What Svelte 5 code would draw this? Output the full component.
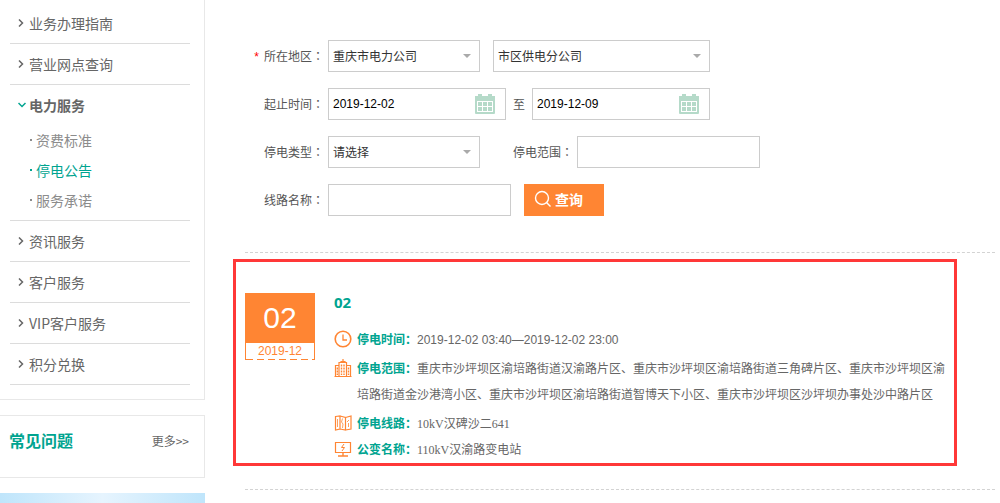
<script lang="ts">
  type MenuItem = { label: string; children?: string[] }

  const menu: MenuItem[] = [
    { label: '业务办理指南' },
    { label: '营业网点查询' },
    { label: '电力服务', children: ['资费标准', '停电公告', '服务承诺'] },
    { label: '资讯服务' },
    { label: '客户服务' },
    { label: 'VIP客户服务' },
    { label: '积分兑换' }
  ]

  let current = $state('停电公告')
  let company = $state('重庆市电力公司')
  let branch = $state('市区供电分公司')
  let startDate = $state('2019-12-02')
  let endDate = $state('2019-12-09')
  let outageType = $state('请选择')
  let range = $state('')
  let line = $state('')
</script>

{#snippet calendar()}
  <svg class="calendar" viewBox="0 0 20 20" aria-hidden="true">
    <path fill="#b5dac9" d="M0 2h3V0h4v2h6V0h4v2h3v17a1 1 0 0 1-1 1H1a1 1 0 0 1-1-1z" />
    <path fill="#fff" d="M2 7h16v11H2z" />
    <path fill="#b5dac9" d="M3 8h4v4H3zM8 8h4v4H8zM13 8h4v4h-4zM3 13h4v4H3zM8 13h4v4H8zM13 13h4v4h-4z" />
  </svg>
{/snippet}

<div class="page">
  <aside class="sidebar">
    <nav class="menu">
      <ul>
        {#each menu as item}
          <li class="menu-item">
            <a class="menu-link" class:open={item.children} href="#menu">
              {#if item.children}
                <svg class="chevron" viewBox="0 0 8 8" aria-hidden="true"><path d="M0.5 2L4 5.5 7.500 2" /></svg>
              {:else}
                <svg class="chevron" viewBox="0 0 8 8" aria-hidden="true"><path d="M1 0.5L4.500 4 1 7.500" /></svg>
              {/if}
              <span>{item.label}</span>
            </a>
            {#if item.children}
              <ul class="submenu">
                {#each item.children as child}
                  <li>
                    <a class="sub-link" class:active={child === current} href="#sub" onclick={() => (current = child)}>{child}</a>
                  </li>
                {/each}
              </ul>
            {/if}
          </li>
        {/each}
      </ul>
    </nav>

    <section class="faq">
      <h2>常见问题</h2>
      <a href="#more">更多&gt;&gt;</a>
    </section>

    <div class="banner"></div>
  </aside>

  <main class="main">
    <form class="search" onsubmit={(e) => e.preventDefault()}>
      <div class="row">
        <label class="label" for="company"><span class="required">*</span>所在地区<span class="colon">：</span></label>
        <div class="select">
          <select id="company" bind:value={company}>
            <option>重庆市电力公司</option>
          </select>
        </div>
        <div class="select wide">
          <select aria-label="供电分公司" bind:value={branch}>
            <option>市区供电分公司</option>
          </select>
        </div>
      </div>

      <div class="row">
        <label class="label" for="start">起止时间<span class="colon">：</span></label>
        <div class="date">
          <input id="start" type="text" bind:value={startDate} />
          {@render calendar()}
        </div>
        <label class="to" for="end">至</label>
        <div class="date">
          <input id="end" type="text" bind:value={endDate} />
          {@render calendar()}
        </div>
      </div>

      <div class="row">
        <label class="label" for="type">停电类型<span class="colon">：</span></label>
        <div class="select">
          <select id="type" bind:value={outageType}>
            <option>请选择</option>
          </select>
        </div>
        <label class="label second" for="range">停电范围<span class="colon">：</span></label>
        <input class="text" id="range" type="text" bind:value={range} />
      </div>

      <div class="row">
        <label class="label" for="line">线路名称<span class="colon">：</span></label>
        <input class="text" id="line" type="text" bind:value={line} />
        <button class="submit" type="submit">
          <svg viewBox="0 0 18 18" aria-hidden="true">
            <circle cx="8" cy="8" r="6.500" />
            <path d="M12.500 12.500L16.500 16.500" />
          </svg>
          查询
        </button>
      </div>
    </form>

    <div class="results">
      <article class="notice">
        <div class="day">
          <div class="day-number">02</div>
          <div class="day-month">2019-12</div>
        </div>

        <div class="info">
          <h3>02</h3>
          <dl>
            <div class="entry spaced">
              <svg class="icon" viewBox="0 0 18 18" aria-hidden="true">
                <circle cx="9" cy="9" r="7.800" stroke-width="1.600" />
                <path d="M9 4.500V10h4" stroke-width="1.300" />
              </svg>
              <div class="entry-text">
                <dt>停电时间：</dt><dd class="time">2019-12-02 03:40—2019-12-02 23:00</dd>
              </div>
            </div>
            <div class="entry spaced">
              <svg class="icon" viewBox="0 0 18 18" aria-hidden="true">
                <path d="M0.500 17.500H17.500M1.500 17.500V6.500H5M5 17.500V3.500H12.500V17.500M7 3.500V2.500h4v1M9 2.500V0M12.500 6.500H16.500V17.500" stroke-width="1.200" />
                <path d="M7.500 5.500V16M10 5.500V16M3.300 8.500V16M14.500 8.500V16" stroke-width="1.400" stroke-dasharray="2 1" />
              </svg>
              <div class="entry-text">
                <dt>停电范围：</dt><dd>重庆市沙坪坝区渝培路街道汉渝路片区、重庆市沙坪坝区渝培路街道三角碑片区、重庆市沙坪坝区渝培路街道金沙港湾小区、重庆市沙坪坝区渝培路街道智博天下小区、重庆市沙坪坝区沙坪坝办事处沙中路片区</dd>
              </div>
            </div>
            <div class="entry">
              <svg class="icon" viewBox="0 0 18 18" aria-hidden="true">
                <path d="M1.500 2.500L6 2V15L1.500 16zM6 2l5.500 1.500V16L6 15M11.500 3.500L17 2V15L11.500 16" stroke-width="1.200" />
                <path d="M3.500 5V13M8.500 4.500l-1 3.500 1.500 2-.5 4M13 8l2-2M14.500 9v4" stroke-width="0.800" />
              </svg>
              <div class="entry-text">
                <dt>停电线路：</dt><dd>10kV汉碑沙二641</dd>
              </div>
            </div>
            <div class="entry">
              <svg class="icon" viewBox="0 0 18 18" aria-hidden="true">
                <path d="M1.500 2.500H16.500V12.500H1.500z" stroke-width="1.200" />
                <path d="M9 12.500V16M4 16H14" stroke-width="1.400" />
                <path d="M10 4L7.500 7.500H10.500L8 11" />
              </svg>
              <div class="entry-text">
                <dt>公变名称：</dt><dd>110kV汉渝路变电站</dd>
              </div>
            </div>
          </dl>
        </div>
      </article>
    </div>
  </main>
</div>

<style>
  :global(body) {
    margin: 0;
    background: #fff;
    color: #666;
    font-family: "Noto Sans CJK SC", sans-serif;
    font-size: 12px;
  }

  .page {
    display: flex;
    gap: 40px;
    padding-right: 5px;
  }

  ul,
  dl,
  dd,
  h2,
  h3 {
    margin: 0;
    padding: 0;
    list-style: none;
  }

  a {
    color: inherit;
    text-decoration: none;
  }

  /* Sidebar */
  .sidebar {
    flex: 0 0 205px;
  }

  .menu {
    padding: 3px 14px 14px 10px;
    border: solid #e8e8e8;
    border-width: 0 1px 1px 0;
  }

  .menu-item {
    border-bottom: 1px solid #dcdcdc;
  }

  .menu-link {
    display: flex;
    align-items: center;
    gap: 3px;
    height: 40px;
    padding-left: 8px;
    font-size: 14px;
  }

  .menu-link.open {
    font-weight: bold;
  }

  .chevron {
    width: 8px;
    height: 8px;
    fill: none;
    stroke: #666;
    stroke-width: 1.5;
  }

  .open .chevron {
    stroke: #00a490;
  }

  .submenu {
    padding: 0 0 5px 20px;
  }

  .sub-link {
    display: flex;
    align-items: center;
    gap: 4px;
    height: 30px;
    color: #8c8c8c;
    font-size: 14px;
  }

  .sub-link::before {
    content: "";
    width: 2px;
    height: 2px;
    background: currentColor;
  }

  .sub-link.active {
    color: #00a490;
  }

  .faq {
    display: flex;
    align-items: center;
    justify-content: space-between;
    margin-top: 15px;
    padding: 12px 15px 25px 9px;
    border: solid #e8e8e8;
    border-width: 1px 1px 1px 0;
  }

  .faq h2 {
    color: #00a490;
    font-size: 16px;
    line-height: 24px;
  }

  .banner {
    height: 10px;
    margin-top: 15px;
    background: linear-gradient(90deg, #bfe5fb, #e6f4fe 50%, #bfe5fb);
  }

  /* Search form */
  .main {
    flex: 1;
    min-width: 0;
    padding-top: 40px;
  }

  .search {
    display: flex;
    flex-direction: column;
    gap: 16px;
    padding-bottom: 36px;
  }

  .row {
    display: flex;
    align-items: center;
  }

  .label,
  .to {
    padding-bottom: 2px;
    color: #555;
  }

  .label {
    box-sizing: border-box;
    width: 83px;
    padding-right: 4px;
    text-align: right;
  }

  .label.second {
    width: auto;
    margin-left: 33px;
  }

  .colon {
    font-family: "Noto Sans CJK TC", sans-serif;
  }

  .required {
    margin-right: 5px;
    color: #f00;
    font-family: "Liberation Sans", sans-serif;
  }

  .to {
    margin: 0 7px;
  }

  select,
  input {
    box-sizing: border-box;
    width: 100%;
    height: 32px;
    margin: 0;
    padding: 0 4px;
    border: 1px solid #ccc;
    border-radius: 0;
    background: #fff;
    color: #333;
    font-family: "Noto Sans CJK SC", sans-serif;
    font-size: 12px;
    appearance: none;
  }

  select {
    display: block;
    padding-bottom: 2px;
  }

  .date input {
    display: block;
    color: #000;
    font-family: "Liberation Sans", sans-serif;
  }

  .select,
  .date {
    position: relative;
  }

  .select {
    width: 152px;
  }

  .select.wide {
    width: 217px;
    margin-left: 13px;
  }

  .select::after {
    content: "";
    position: absolute;
    top: 14px;
    right: 9px;
    border: solid transparent;
    border-width: 4px 4px 0;
    border-top-color: #aaa;
    pointer-events: none;
  }

  .date {
    width: 178px;
  }

  .calendar {
    position: absolute;
    top: 6px;
    right: 11px;
    width: 20px;
    height: 20px;
  }

  .text {
    width: 183px;
  }

  .submit {
    display: flex;
    align-items: center;
    gap: 3px;
    width: 80px;
    height: 32px;
    margin-left: 13px;
    padding: 0 10px 2px;
    border: 0;
    background: #ff8533;
    color: #fff;
    font-family: "Noto Sans CJK SC", sans-serif;
    font-size: 14px;
    font-weight: bold;
    white-space: nowrap;
    cursor: pointer;
  }

  .submit svg {
    flex: none;
    width: 18px;
    height: 18px;
    fill: none;
    stroke: #fff;
    stroke-width: 1.4;
  }

  /* Results */
  .results {
    padding: 6px 38px 23px 0;
    border: dashed #d3d3d3;
    border-width: 1px 0;
  }

  .notice {
    display: flex;
    gap: 19px;
    margin-left: -12px;
    padding: 31px 0 1px 9px;
    border: 3px solid #ff3838;
  }

  .day {
    flex: 0 0 70px;
    color: #ff8533;
    font-family: "Liberation Sans", sans-serif;
    text-align: center;
  }

  .day-number {
    background: #ff8533;
    color: #fff;
    font-size: 30px;
    line-height: 50px;
  }

  .day-month {
    padding-bottom: 1px;
    border: solid #ff8533;
    border-width: 0 1px;
    background: repeating-linear-gradient(90deg, #ff8533 0 7px, #fff 7px 11px) bottom / 100% 1px no-repeat;
    line-height: 16px;
  }

  .info {
    flex: 1;
    min-width: 0;
  }

  h3 {
    margin-bottom: 15px;
    color: #00a490;
    font-family: "Noto Sans", sans-serif;
    font-size: 15px;
    line-height: 18px;
  }

  .entry {
    display: flex;
    gap: 5px;
    line-height: 26px;
  }

  .entry.spaced {
    margin-bottom: 3px;
  }

  .icon {
    flex: none;
    width: 18px;
    height: 18px;
    margin-top: 4px;
    fill: none;
    stroke: #ff8533;
  }

  .entry-text {
    flex: 1;
    min-width: 0;
  }

  dt,
  dd {
    display: inline;
  }

  dt {
    color: #00a490;
    font-weight: bold;
  }

  /* line height comes from the entry, so mixed fonts don't stretch the rows */
  dd {
    font-family: "Liberation Serif", "Noto Sans CJK SC", sans-serif;
    line-height: 1;
  }

  dd.time {
    font-family: "Liberation Sans", sans-serif;
  }
</style>
